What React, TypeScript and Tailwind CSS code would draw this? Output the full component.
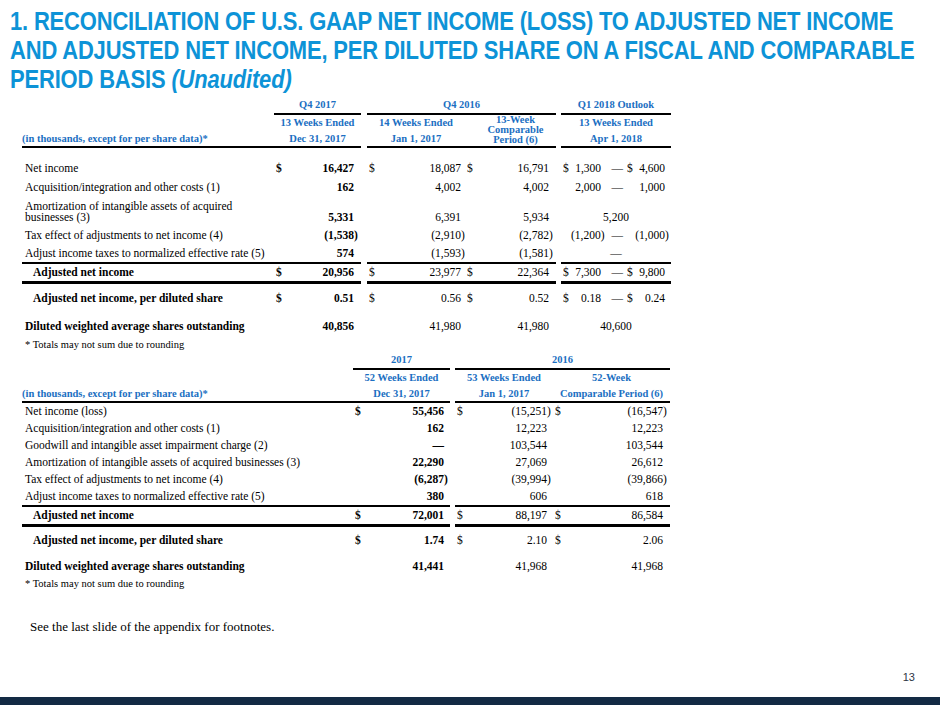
import React from "react";

const G1 = "grid grid-cols-[252px_87px_6px_98px_91px_5px_110px]";
const G2 = "grid grid-cols-[331px_97px_5px_98px_117px]";
const OUT = "grid grid-cols-[8px_30px_26px_6px_32px_4px] pl-[2px]";

function Num({ v, bold = false }: { v: string; bold?: boolean }) {
  const neg = v.startsWith("(") && v.endsWith(")");
  const body = neg ? v.slice(0, -1) : v;
  return (
    <span className={"whitespace-nowrap " + (bold ? "font-bold" : "")}>
      {body}
      <span className="inline-block w-[4px] text-left">{neg ? ")" : ""}</span>
    </span>
  );
}

function Money({
  v,
  dollar = false,
  bold = false,
  pr,
}: {
  v: string;
  dollar?: boolean;
  bold?: boolean;
  pr: string;
}) {
  return (
    <div className={"flex justify-between items-end pl-[2px] " + pr}>
      <span className={bold ? "font-bold" : ""}>{dollar ? "$" : ""}</span>
      <Num v={v} bold={bold} />
    </div>
  );
}

function Outlook({
  a,
  b,
  dollar = false,
}: {
  a: string;
  b: string;
  dollar?: boolean;
}) {
  return (
    <div className={OUT + " items-end"}>
      <span>{dollar ? "$" : ""}</span>
      <span className="text-right whitespace-nowrap">{a}</span>
      <span className="text-right pr-[4px]">—</span>
      <span>{dollar ? "$" : ""}</span>
      <span className="text-right whitespace-nowrap">{b.replace(/\)$/, "")}</span>
      <span className="whitespace-nowrap">{b.endsWith(")") ? ")" : ""}</span>
    </div>
  );
}

type R1 = {
  label: React.ReactNode;
  h: string;
  c1: string;
  c2: string;
  c3: string;
  c4: React.ReactNode;
  d?: boolean;
};

function Row1({ r }: { r: R1 }) {
  return (
    <div className={G1 + " items-end " + r.h}>
      <div className="pl-[3px] leading-[11px] pb-[3px]">{r.label}</div>
      <Money v={r.c1} dollar={r.d} bold pr="pr-[3px]" />
      <div />
      <Money v={r.c2} dollar={r.d} pr="pr-0" />
      <Money v={r.c3} dollar={r.d} pr="pr-[3px]" />
      <div />
      <div>{r.c4}</div>
    </div>
  );
}

function Row2({
  label,
  c1,
  c2,
  c3,
  d = false,
  h = "h-[17px]",
  cls = "",
  lcls = "pl-[3px]",
}: {
  label: string;
  c1: string;
  c2: string;
  c3: string;
  d?: boolean;
  h?: string;
  cls?: string;
  lcls?: string;
}) {
  return (
    <div className={G2 + " items-center " + h + " " + cls}>
      <div className={lcls}>{label}</div>
      <Money v={c1} dollar={d} bold pr="pr-[2px]" />
      <div />
      <Money v={c2} dollar={d} pr="pr-[2px]" />
      <Money v={c3} dollar={d} pr="pr-[3px]" />
    </div>
  );
}

export default function App() {
  const blue = "text-[#1b6fc2] font-bold text-[10.5px]";
  const tl = "whitespace-nowrap origin-left scale-x-[0.845]";
  return (
    <div className="w-[940px] h-[705px] bg-white flex flex-col overflow-hidden font-['Liberation_Serif','Times_New_Roman',serif] text-[11.5px] text-black">
      {/* Title */}
      <div className="pt-[7px] pl-[10px] font-['Liberation_Sans',Arial,sans-serif] font-bold text-[26px] leading-[29px] text-[#0d93d7] tracking-[-0.2px]">
        <div className={tl}>
          1. RECONCILIATION OF U.S. GAAP NET INCOME (LOSS) TO ADJUSTED NET INCOME
        </div>
        <div className={tl}>
          AND ADJUSTED NET INCOME, PER DILUTED SHARE ON A FISCAL AND COMPARABLE
        </div>
        <div className={tl}>
          PERIOD BASIS <span className="italic">(Unaudited)</span>
        </div>
      </div>

      {/* Table 1 */}
      <div className="ml-[22px] mt-[3px] w-[649px]">
        <div className={G1 + " h-[18px] " + blue}>
          <div />
          <div className="border-b-2 border-black text-center leading-[16px]">Q4 2017</div>
          <div />
          <div className="col-span-2 border-b-2 border-black text-center leading-[16px]">Q4 2016</div>
          <div />
          <div className="border-b-2 border-black text-center leading-[16px]">Q1 2018 Outlook</div>
        </div>
        <div className={G1 + " grid-rows-[16px_17px] " + blue}>
          <div />
          <div className="text-center leading-[16px]">13 Weeks Ended</div>
          <div />
          <div className="text-center leading-[16px]">14 Weeks Ended</div>
          <div className="row-span-2 border-b-2 border-black text-center leading-[10px] flex flex-col justify-end pb-[1px] pl-[10px]">
            <span>13-Week</span>
            <span>Comparable</span>
            <span>Period (6)</span>
          </div>
          <div className="row-span-2" />
          <div className="text-center leading-[16px]">13 Weeks Ended</div>
          <div className="border-b-2 border-black leading-[15px]">
            (in thousands, except for per share data)*
          </div>
          <div className="border-b-2 border-black text-center leading-[15px]">Dec 31, 2017</div>
          <div />
          <div className="border-b-2 border-black text-center leading-[15px]">Jan 1, 2017</div>
          <div className="border-b-2 border-black text-center leading-[15px]">Apr 1, 2018</div>
        </div>

        <div className="mt-[11px]">
          <Row1
            r={{
              label: "Net income",
              h: "h-[18px]",
              c1: "16,427",
              c2: "18,087",
              c3: "16,791",
              d: true,
              c4: <Outlook a="1,300" b="4,600" dollar />,
            }}
          />
          <Row1
            r={{
              label: "Acquisition/integration and other costs (1)",
              h: "h-[19px]",
              c1: "162",
              c2: "4,002",
              c3: "4,002",
              c4: <Outlook a="2,000" b="1,000" />,
            }}
          />
          <Row1
            r={{
              label: (
                <>
                  Amortization of intangible assets of acquired
                  <br />
                  businesses (3)
                </>
              ),
              h: "h-[30px]",
              c1: "5,331",
              c2: "6,391",
              c3: "5,934",
              c4: <div className="text-center">5,200</div>,
            }}
          />
          <Row1
            r={{
              label: "Tax effect of adjustments to net income (4)",
              h: "h-[18px]",
              c1: "(1,538)",
              c2: "(2,910)",
              c3: "(2,782)",
              c4: <Outlook a="(1,200)" b="(1,000)" />,
            }}
          />
          <Row1
            r={{
              label: "Adjust income taxes to normalized effective rate (5)",
              h: "h-[18px]",
              c1: "574",
              c2: "(1,593)",
              c3: "(1,581)",
              c4: <div className="text-center">—</div>,
            }}
          />
          {/* Adjusted net income */}
          <div className={G1 + " h-[21px]"}>
            <div className="border-t-2 border-b-[3px] border-black pl-[11px] font-bold flex items-center">
              Adjusted net income
            </div>
            <div className="border-t-2 border-b-[3px] border-black flex items-center">
              <div className="w-full">
                <Money v="20,956" dollar bold pr="pr-[3px]" />
              </div>
            </div>
            <div />
            <div className="border-t-2 border-b-[3px] border-black flex items-center">
              <div className="w-full">
                <Money v="23,977" dollar pr="pr-0" />
              </div>
            </div>
            <div className="border-t-2 border-b-[3px] border-black flex items-center">
              <div className="w-full">
                <Money v="22,364" dollar pr="pr-[3px]" />
              </div>
            </div>
            <div />
            <div className="border-t-2 border-b-[3px] border-black flex items-center">
              <div className="w-full">
                <Outlook a="7,300" b="9,800" dollar />
              </div>
            </div>
          </div>
          <div className={G1 + " h-[18px] mt-[7px] items-center"}>
            <div className="pl-[11px] font-bold">Adjusted net income, per diluted share</div>
            <Money v="0.51" dollar bold pr="pr-[3px]" />
            <div />
            <Money v="0.56" dollar pr="pr-0" />
            <Money v="0.52" dollar pr="pr-[3px]" />
            <div />
            <Outlook a="0.18" b="0.24" dollar />
          </div>
          <div className={G1 + " h-[18px] mt-[10px] items-center"}>
            <div className="pl-[3px] font-bold">Diluted weighted average shares outstanding</div>
            <Money v="40,856" bold pr="pr-[3px]" />
            <div />
            <Money v="41,980" pr="pr-0" />
            <Money v="41,980" pr="pr-[3px]" />
            <div />
            <div className="text-center">40,600</div>
          </div>
          <div className="h-[14px] mt-[2px] pl-[3px] text-[10.5px] leading-[14px]">
            * Totals may not sum due to rounding
          </div>
        </div>
      </div>

      {/* Table 2 */}
      <div className="ml-[22px] w-[648px]">
        <div className={G2 + " h-[18px] " + blue}>
          <div />
          <div className="border-b-2 border-black text-center leading-[16px]">2017</div>
          <div />
          <div className="col-span-2 border-b-2 border-black text-center leading-[16px]">2016</div>
        </div>
        <div className={G2 + " h-[16px] leading-[16px] " + blue}>
          <div />
          <div className="text-center">52 Weeks Ended</div>
          <div />
          <div className="text-center">53 Weeks Ended</div>
          <div className="text-center">52-Week</div>
        </div>
        <div className={G2 + " h-[17px] leading-[15px] " + blue}>
          <div className="border-b-2 border-black">(in thousands, except for per share data)*</div>
          <div className="border-b-2 border-black text-center">Dec 31, 2017</div>
          <div />
          <div className="border-b-2 border-black text-center">Jan 1, 2017</div>
          <div className="border-b-2 border-black text-center">Comparable Period (6)</div>
        </div>
        <Row2 label="Net income (loss)" c1="55,456" c2="(15,251)" c3="(16,547)" d />
        <Row2 label="Acquisition/integration and other costs (1)" c1="162" c2="12,223" c3="12,223" />
        <Row2 label="Goodwill and intangible asset impairment charge (2)" c1="—" c2="103,544" c3="103,544" />
        <Row2 label="Amortization of intangible assets of acquired businesses (3)" c1="22,290" c2="27,069" c3="26,612" />
        <Row2 label="Tax effect of adjustments to net income (4)" c1="(6,287)" c2="(39,994)" c3="(39,866)" />
        <Row2 label="Adjust income taxes to normalized effective rate (5)" c1="380" c2="606" c3="618" />
        <div className={G2 + " h-[18px]"}>
          <div className="border-t-2 border-b-[3px] border-black pl-[11px] font-bold flex items-center">
            Adjusted net income
          </div>
          <div className="border-t-2 border-b-[3px] border-black flex items-center">
            <div className="w-full">
              <Money v="72,001" dollar bold pr="pr-[2px]" />
            </div>
          </div>
          <div />
          <div className="border-t-2 border-b-[3px] border-black flex items-center">
            <div className="w-full">
              <Money v="88,197" dollar pr="pr-[2px]" />
            </div>
          </div>
          <div className="border-t-2 border-b-[3px] border-black flex items-center">
            <div className="w-full">
              <Money v="86,584" dollar pr="pr-[3px]" />
            </div>
          </div>
        </div>
        <Row2
          label="Adjusted net income, per diluted share"
          c1="1.74"
          c2="2.10"
          c3="2.06"
          d
          h="h-[18px]"
          cls="mt-[9px]"
          lcls="pl-[11px] font-bold"
        />
        <Row2
          label="Diluted weighted average shares outstanding"
          c1="41,441"
          c2="41,968"
          c3="41,968"
          h="h-[18px]"
          cls="mt-[8px]"
          lcls="pl-[3px] font-bold"
        />
        <div className="h-[14px] mt-[1px] pl-[3px] text-[10.5px] leading-[14px]">
          * Totals may not sum due to rounding
        </div>
      </div>

      <div className="mt-[28px] pl-[30px] text-[13px] leading-[16px]">
        See the last slide of the appendix for footnotes.
      </div>

      <div className="mt-[34px] pr-[25px] flex justify-end font-['Liberation_Sans',Arial,sans-serif] text-[11px] leading-[16px] text-[#2d3645]">
        13
      </div>

      <div className="mt-auto h-[8px] bg-[#132a44]" />
    </div>
  );
}
